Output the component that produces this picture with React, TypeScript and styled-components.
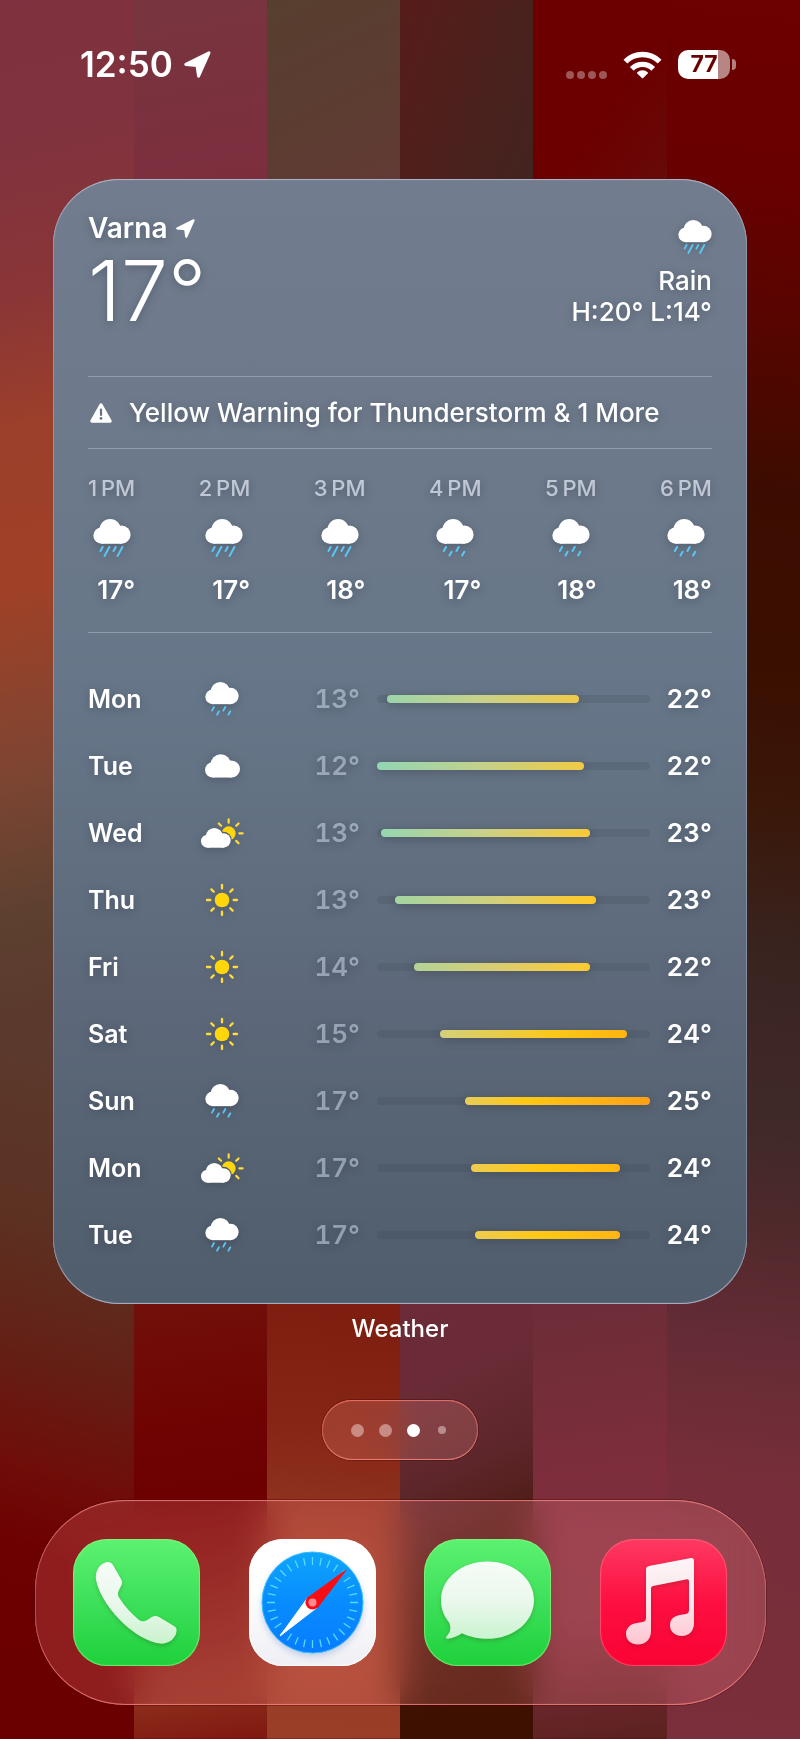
import React from "react";
import styled, { createGlobalStyle } from "styled-components";

const GlobalStyle = createGlobalStyle`
  *, *::before, *::after { box-sizing: border-box; }
  body {
    margin: 0;
    background: #6d0000;
    color: #fff;
    font-family: Inter, "Liberation Sans", sans-serif;
    -webkit-font-smoothing: antialiased;
  }
  #root { display: flex; flex-direction: column; min-height: 100vh; }
  h1, p, ol { margin: 0; padding: 0; list-style: none; }
  button { border: 0; padding: 0; background: none; color: inherit; font: inherit; cursor: pointer; }
  svg { display: block; }
`;

/* Wallpaper: six vertical stripes, each painted as a top and a bottom piece.
   Every stripe is a pixel wider than its share so that no seam shows. */
const stripe = (index: number, edge: "top" | "bottom", height: string, gradient: string) =>
  `linear-gradient(${gradient}) ${index * 20}% ${edge === "top" ? "0" : "100%"} / calc(100% / 6 + 1px) ${height} no-repeat`;

const wallpaper = [
  stripe(0, "top", "60%",
    "168deg, #7f313f 0%, #80323e 13%, #8a3637 28%, #9c3f2b 40%, #a04127 55%, #7c4532 73%, #5d4030 86%, #5b3a2d 95%"),
  stripe(0, "bottom", "41%", "195deg, #5b3a2d 5%, #5c3122 30%, #641f15 48%, #6f0e0a 62%, #6d0000 74%, #6a0000 100%"),
  stripe(1, "top", "20%", "170deg, #77353f, #7f2c3e 70%"),
  stripe(1, "bottom", "35%", "172deg, #6a1a12 0%, #71110a 27%, #6f0202 50%, #6d0000 60%, #7e1f14 84%, #8a2c1c 92%, #80180f 100%"),
  stripe(2, "top", "20%", "155deg, #573f2f 0%, #5f3b33 50%, #6f3a3f 80%"),
  stripe(2, "bottom", "35%", "186deg, #7c1c0e 0%, #7e1e10 30%, #862617 50%, #963a24 70%, #9b3e27 100%"),
  stripe(3, "top", "20%", "110deg, #571c1a 0%, #4b211d 45%, #3c2521 100%"),
  stripe(3, "bottom", "35%", "155deg, #6c2d39 0%, #6a2b36 40%, #5d262a 55%, #4a190f 70%, #3d1000 90%"),
  stripe(4, "top", "20%", "125deg, #6c0000 0%, #6c0000 40%, #611511 100%"),
  stripe(4, "bottom", "35%", "172deg, #602b36 0%, #6e2d38 32%, #7d2d3c 55%, #7b2d3b 80%, #5c211f 100%"),
  stripe(5, "top", "100%",
    "186deg, #6d0000 0%, #690000 10%, #560500 19%, #3d0c00 28%, #3a0f00 38%, #3a1708 46%, #39231f 54%, #41292a 65%, #4f292b 70%, #652c35 77%, #772e3a 85%, #7b2e3b 100%"),
].join(", ");

const Screen = styled.main`
  flex: 1;
  display: flex;
  flex-direction: column;
  align-items: stretch;
  padding-bottom: 32px;
  background: ${wallpaper};
`;

const StatusBar = styled.header`
  display: flex;
  align-items: center;
  justify-content: space-between;
  padding: 43px 64px 43px 80px;
  height: 129px;
  margin-bottom: 50px;
`;

const StatusGroup = styled.div<{ $gap: number }>`
  display: flex;
  align-items: center;
  gap: ${(p) => p.$gap}px;
`;

const Time = styled.time`
  font-size: 35px;
  line-height: 43px;
  font-weight: 600;
`;

const SignalDots = styled.div`
  display: flex;
  align-self: flex-end;
  gap: 3px;
  i {
    width: 8px;
    height: 8px;
    border-radius: 50%;
    background: rgba(255, 255, 255, 0.34);
  }
`;

const Battery = styled.div`
  display: flex;
  align-items: center;
  gap: 2px;
  &::after {
    content: "";
    width: 4px;
    height: 11px;
    border-radius: 0 6px 6px 0;
    background: rgba(255, 255, 255, 0.5);
  }
`;

const BatteryLevel = styled.div`
  width: 52px;
  height: 29px;
  border-radius: 10px;
  background: linear-gradient(90deg, #fff 77%, rgba(255, 255, 255, 0.52) 77%);
  color: #6b0000;
  font-size: 23px;
  line-height: 29px;
  font-weight: 700;
  text-align: center;
`;

const Widget = styled.article`
  margin: 0 53px;
  padding: 33px 35px 36px;
  border-radius: 66px;
  background: linear-gradient(180deg, #717d8e 0%, #6e7a8b 20%, #667688 46%, #5d697a 72%, #505d6c 100%);
  box-shadow:
    inset 0 0 0 1px rgba(190, 200, 220, 0.28),
    inset 0 1px 1px rgba(225, 220, 240, 0.5),
    inset 0 -1px 1px rgba(215, 210, 240, 0.65);
  text-shadow: 0 2px 8px rgba(40, 50, 65, 0.4);
`;

const Summary = styled.section`
  display: flex;
  justify-content: space-between;
  height: 165px;
  border-bottom: 1px solid #919dae;
`;

const Place = styled.h1`
  display: flex;
  align-items: center;
  gap: 9px;
  font-size: 28px;
  line-height: 32px;
  font-weight: 600;
`;

const BigTemp = styled.p`
  font-size: 84px;
  line-height: 94px;
  font-weight: 300;
`;

const Conditions = styled.div`
  display: flex;
  flex-direction: column;
  align-items: flex-end;
  padding-top: 8px;
  font-size: 26px;
  line-height: 31px;
  font-weight: 500;
  svg { margin-bottom: 11px; }
`;

const Warning = styled.section`
  display: flex;
  align-items: center;
  gap: 17px;
  height: 72px;
  padding-left: 2px;
  border-bottom: 1px solid #919dae;
  font-size: 26px;
  line-height: 32px;
  font-weight: 500;
`;

const Hours = styled.ol`
  display: flex;
  justify-content: space-between;
  height: 184px;
  padding-top: 25px;
  border-bottom: 1px solid #919dae;
`;

const Hour = styled.li`
  display: flex;
  flex-direction: column;
  align-items: center;
  font-size: 26px;
  line-height: 32px;
  font-weight: 600;
  time {
    margin-bottom: 17px;
    color: rgba(240, 245, 255, 0.66);
    font-size: 22px;
    line-height: 28px;
    font-weight: 500;
  }
  span { align-self: flex-end; margin-top: 17px; }
`;

const Days = styled.ol`
  padding-top: 32px;
`;

const Day = styled.li`
  display: grid;
  grid-template-columns: 109px 50px 1fr 273px 62px;
  align-items: center;
  height: 67px;
  font-size: 26px;
  line-height: 32px;
  font-weight: 600;
`;

const DayName = styled.span`
  font-size: 25px;
`;

const IconCell = styled.span`
  display: flex;
  justify-content: center;
`;

const Temp = styled.span<{ $dim?: boolean }>`
  text-align: right;
  font-variant-numeric: tabular-nums;
  padding-right: ${(p) => (p.$dim ? 17 : 0)}px;
  color: ${(p) => (p.$dim ? "rgba(205, 215, 235, 0.56)" : "#fff")};
`;

const Track = styled.span`
  display: block;
  height: 8px;
  border-radius: 4px;
  background: rgba(50, 60, 75, 0.16);
`;

const Range = styled.span<{ $colors: string }>`
  display: block;
  height: 8px;
  border-radius: 4px;
  background: linear-gradient(90deg, ${(p) => p.$colors});
  box-shadow: 0 2px 10px rgba(50, 50, 60, 0.4);
`;

const WidgetName = styled.p`
  margin-top: 10px;
  text-align: center;
  font-size: 24px;
  line-height: 30px;
  font-weight: 500;
`;

const Pager = styled.nav`
  align-self: center;
  display: flex;
  align-items: center;
  justify-content: space-between;
  width: 156px;
  height: 60px;
  margin: 56px 0 40px;
  padding: 0 29px;
  border-radius: 30px;
  background: rgba(255, 160, 150, 0.2);
  backdrop-filter: blur(14px);
  box-shadow:
    inset 0 0 0 1px rgba(255, 130, 120, 0.4),
    inset 0 1px 1px rgba(255, 130, 120, 0.6),
    inset 0 -1px 1px rgba(255, 150, 140, 0.7),
    0 0 0 1px rgba(50, 0, 0, 0.3);
`;

const Dot = styled.button<{ $active?: boolean; $small?: boolean }>`
  width: ${(p) => (p.$small ? 8 : 13)}px;
  height: ${(p) => (p.$small ? 8 : 13)}px;
  margin: 0 ${(p) => (p.$small ? 3 : 0)}px;
  border-radius: 50%;
  background: ${(p) => (p.$active ? "#fff" : "rgba(255, 235, 235, 0.45)")};
`;

const Dock = styled.nav`
  display: flex;
  align-items: center;
  justify-content: space-between;
  height: 205px;
  margin: 0 34px 0 35px;
  padding: 0 39px 0 38px;
  border-radius: 90px;
  background: rgba(255, 145, 150, 0.2);
  backdrop-filter: blur(18px) brightness(1.08);
  box-shadow:
    inset 0 0 0 1px rgba(255, 130, 130, 0.35),
    inset 0 1px 1px rgba(255, 150, 150, 0.6),
    inset 0 -1px 1px rgba(255, 140, 130, 0.7),
    0 0 0 1px rgba(50, 0, 0, 0.3);
`;

const AppIcon = styled.button<{ $fill: string; $rim: string }>`
  width: 127px;
  height: 127px;
  border-radius: 34px;
  overflow: hidden;
  background: ${(p) => p.$fill};
  box-shadow: inset 0 0 1px 1px ${(p) => p.$rim};
`;

const LocationArrow = ({ size }: { size: number }) => (
  <svg width={size} height={size} viewBox="0 0 27 27" fill="#fff" stroke="#fff" strokeWidth="3" strokeLinejoin="round" aria-hidden="true">
    <path d="M1.8 13.4 25 1.8 14.6 25.2 13 14.6Z" />
  </svg>
);

const Wifi = () => (
  <svg width="39" height="28" viewBox="0 0 39 28" fill="none" stroke="#fff" strokeWidth="5.4" aria-hidden="true">
    <path d="M2.4 10.6A24.2 24.2 0 0 1 36.6 10.6" />
    <path d="M8.8 17.8A15.2 15.2 0 0 1 30.2 17.8" />
    <path d="M19.5 26.4 15 21.9A6.6 6.6 0 0 1 24 21.9Z" fill="#fff" strokeWidth="2" strokeLinejoin="round" />
  </svg>
);

const WarningIcon = () => (
  <svg width="22" height="20" viewBox="0 0 22 20" aria-hidden="true">
    <path d="M11 2 20 18H2Z" fill="#fff" stroke="#fff" strokeWidth="3.4" strokeLinejoin="round" />
    <path d="M11 6.6V12" stroke="#667284" strokeWidth="2.2" strokeLinecap="round" />
    <circle cx="11" cy="15.4" r="1.4" fill="#667284" />
  </svg>
);

const SkySvg = styled.svg`
  overflow: visible;
  filter: drop-shadow(0 2px 5px rgba(40, 50, 65, 0.35));
`;

const CloudShape = ({ transform }: { transform?: string }) => (
  <g transform={transform} fill="#fff">
    <circle cx="45" cy="29" r="29" />
    <circle cx="22" cy="44.5" r="22" />
    <circle cx="75.5" cy="42" r="24.5" />
    <rect x="22" y="36" width="54" height="30.5" />
  </g>
);

type Sky = "rain" | "drizzle" | "cloud" | "partly" | "sun";

const drops: Record<string, string> = {
  rain: "M25 75 19 86M43 75 30 99M60 75 54 86M78 75 65 99",
  drizzle: "M26 75 20 86M41 88 35 98M60 75 54 86M75 88 69 98",
};

const rays = (inner: number, outer: number, angles: number[]) =>
  angles
    .map((a) => {
      const c = Math.cos((a * Math.PI) / 180);
      const s = Math.sin((a * Math.PI) / 180);
      return `M${inner * c} ${inner * s}L${outer * c} ${outer * s}`;
    })
    .join("");

const SkyIcon = ({ sky, size = 34 }: { sky: Sky; size?: number }) => {
  if (sky === "sun")
    return (
      <SkySvg width="32" height="32" viewBox="-48 -48 96 96" role="img" aria-label="Sunny">
        <circle r="22" fill="#ffd60a" />
        <path d={rays(35, 45, [0, 45, 90, 135, 180, 225, 270, 315])} stroke="#ffdc3a" strokeWidth="7" strokeLinecap="round" />
      </SkySvg>
    );
  if (sky === "partly")
    return (
      <SkySvg width="43" height="30" viewBox="455 501 129 90" role="img" aria-label="Partly cloudy">
        <mask id="cloud-gap">
          <rect x="440" y="490" width="160" height="110" fill="#fff" />
          <g fill="#000" stroke="#000" strokeWidth="7">
            <circle cx="495" cy="557" r="26" />
            <circle cx="522" cy="568" r="22" />
          </g>
        </mask>
        <g mask="url(#cloud-gap)">
          <circle cx="538" cy="547" r="21" fill="#ffd60a" />
        </g>
        <g transform="translate(538 547)">
          <path d={rays(32, 42, [0, 45, 225, 270, 315])} stroke="#ffdc3a" strokeWidth="6.5" strokeLinecap="round" />
        </g>
        <CloudShape transform="translate(455 531) scale(.89)" />
      </SkySvg>
    );
  if (sky === "cloud")
    return (
      <SkySvg width="35" height="24" viewBox="0 0 100 67" role="img" aria-label="Cloudy">
        <CloudShape />
      </SkySvg>
    );
  return (
    <SkySvg width={size} height={size} viewBox="0 0 100 102" role="img" aria-label="Rain">
      <CloudShape />
      <path d={drops[sky]} fill="none" stroke="#5ac8f5" strokeWidth="5.4" strokeLinecap="round" />
    </SkySvg>
  );
};

const GlyphFill = ({ id, to }: { id: string; to: string }) => (
  <linearGradient id={id} x1="0" y1="0" x2="0" y2="1">
    <stop offset="0" stopColor="#fff" stopOpacity=".95" />
    <stop offset=".5" stopColor="#fff" stopOpacity=".9" />
    <stop offset="1" stopColor={to} />
  </linearGradient>
);

const Glyph = styled.svg.attrs({ width: 127, height: 127, viewBox: "0 0 127 127", "aria-hidden": true })`
  .raised { filter: drop-shadow(0 2px 2px rgba(40, 30, 10, 0.22)); }
  .dial { filter: drop-shadow(0 3px 3px rgba(40, 90, 180, 0.25)); }
`;

const PhoneGlyph = () => (
  <Glyph>
    <defs><GlyphFill id="phone-fill" to="#c9f2cd" /></defs>
    <path
      className="raised"
      fill="url(#phone-fill)"
      d="M31 24C35 22 38 23 40 26L48 40C49.5 43 49.5 45 48 47L46 51C44.5 54 44.5 57 47 60C52 68 59 75 66 81C69 83 72 82.5 75 80.5L78 78.5C81 76.8 83 76.5 86 78L101 87C104 89 104 91 103 95C100 102 94 105 87 104.6C75 103 62 95 51 85C38 73 26 56 23 41C22 33 25 27 31 24Z"
    />
  </Glyph>
);

const CompassGlyph = () => (
  <Glyph>
    <defs>
      <linearGradient id="compass-fill" x1="0" y1="0" x2="0" y2="1">
        <stop offset="0" stopColor="#0ea5fb" />
        <stop offset=".5" stopColor="#088cff" />
        <stop offset="1" stopColor="#087cff" />
      </linearGradient>
    </defs>
    <g transform="translate(63.5 63.5)">
      <circle className="dial" r="50.5" fill="url(#compass-fill)" stroke="#35bdfb" strokeWidth="1" />
      <path d={rays(37.5, 45.5, Array.from({ length: 32 }, (_, i) => i * 11.25))} stroke="#55dcfa" strokeWidth="1.3" />
      <path d="M-32.5 33.5 -5 -4.5 4.5 5Z" fill="#fff" stroke="#fff" strokeLinejoin="round" />
      <path d="M33.5 -32.5 -5 -4.5 5 5Z" fill="#f90d12" stroke="#f90d12" strokeLinejoin="round" />
      <circle r="7" fill="#f90d12" />
      <circle r="4" fill="#ff8b8e" />
    </g>
  </Glyph>
);

const MessageGlyph = () => (
  <Glyph>
    <defs><GlyphFill id="message-fill" to="#caf3cf" /></defs>
    <path
      className="raised"
      fill="url(#message-fill)"
      d="M63.5 22.5C89.5 22.5 110 39.5 110 61.2C110 82.8 89.5 99.8 63.5 99.8C55 99.8 45 98 38 94.3C33 97.5 28 99.6 23.8 99.7C21.6 99.7 21.3 98.5 22.8 97C26.5 93.5 27.5 88 25 83.5C20 77 17 70 17 61.2C17 39.5 37.5 22.5 63.5 22.5Z"
    />
  </Glyph>
);

const MusicGlyph = () => (
  <Glyph>
    <defs><GlyphFill id="music-fill" to="#ffc4d0" /></defs>
    <path
      className="raised"
      fill="url(#music-fill)"
      d="M49 27 91 19Q94 18.5 94 21.5V84C94 92 89 97 82 97C75 97 70 92.5 70 86.5C70 80 74 77 80 76L86 75C88 74.5 89 73.5 89 71V42Q89 40 87 40.3L53 47Q51 47.4 51 49.5V92C51 100 46 105.5 38 105.5C31 105.5 26 101 26 95C26 89 30 85 37 84L42.5 83C45 82.5 46 81.5 46 79V30.5Q46 27.6 49 27Z"
    />
  </Glyph>
);

const hours: { time: string; sky: Sky; temp: number }[] = [
  { time: "1\u202fPM", sky: "rain", temp: 17 },
  { time: "2\u202fPM", sky: "rain", temp: 17 },
  { time: "3\u202fPM", sky: "rain", temp: 18 },
  { time: "4\u202fPM", sky: "drizzle", temp: 17 },
  { time: "5\u202fPM", sky: "drizzle", temp: 18 },
  { time: "6\u202fPM", sky: "drizzle", temp: 18 },
];

/* start and end are the share of the track, in percent, that the range bar covers. */
const days: { name: string; sky: Sky; low: number; high: number; start: number; end: number; colors: string }[] = [
  { name: "Mon", sky: "drizzle", low: 13, high: 22, start: 3.7, end: 74, colors: "#9bd5a9, #c9d187 50%, #efca47" },
  { name: "Tue", sky: "cloud", low: 12, high: 22, start: 0, end: 75.8, colors: "#91d6b4, #c3d18b 50%, #f1ca43" },
  { name: "Wed", sky: "partly", low: 13, high: 23, start: 1.6, end: 78.2, colors: "#96d6b0, #cbd084 50%, #f9ca36" },
  { name: "Thu", sky: "sun", low: 13, high: 23, start: 6.6, end: 80.2, colors: "#a4d4a2, #d2cf7c 50%, #f8ca36 88%, #ffc929" },
  { name: "Fri", sky: "sun", low: 14, high: 22, start: 13.5, end: 78, colors: "#b3d395, #dcce6c 50%, #fdca2e" },
  { name: "Sat", sky: "sun", low: 15, high: 24, start: 23, end: 91.6, colors: "#d3d07c, #fdc818 62%, #ffb412" },
  { name: "Sun", sky: "drizzle", low: 17, high: 25, start: 32.2, end: 100, colors: "#e6cd59, #ffc814 32%, #ffa015" },
  { name: "Mon", sky: "partly", low: 17, high: 24, start: 34.4, end: 89, colors: "#eccc50, #ffc814 45%, #ffb514" },
  { name: "Tue", sky: "drizzle", low: 17, high: 24, start: 36, end: 89, colors: "#eccc50, #ffc814 45%, #ffb514" },
];

const green = "linear-gradient(180deg, #5cf271 0%, #3de05a 50%, #1ed03b 100%)";

const apps = [
  { name: "Phone", fill: green, rim: "rgba(150, 240, 130, 0.7)", Icon: PhoneGlyph },
  { name: "Safari", fill: "linear-gradient(180deg, #fff 40%, #efeff4)", rim: "#fff", Icon: CompassGlyph },
  { name: "Messages", fill: green, rim: "rgba(150, 240, 130, 0.7)", Icon: MessageGlyph },
  { name: "Music", fill: "linear-gradient(180deg, #fd3a62 0%, #fd0f41 50%, #fb0234 100%)", rim: "rgba(255, 110, 130, 0.65)", Icon: MusicGlyph },
];

export default function App() {
  return (
    <>
      <GlobalStyle />
      <Screen>
        <StatusBar>
          <StatusGroup $gap={11}>
            <Time>12:50</Time>
            <LocationArrow size={27} />
          </StatusGroup>
          <StatusGroup $gap={16}>
            <SignalDots><i /><i /><i /><i /></SignalDots>
            <Wifi />
            <Battery><BatteryLevel>77</BatteryLevel></Battery>
          </StatusGroup>
        </StatusBar>

        <Widget>
          <Summary>
            <div>
              <Place>Varna <LocationArrow size={19} /></Place>
              <BigTemp>17°</BigTemp>
            </div>
            <Conditions>
              <SkyIcon sky="rain" />
              <p>Rain</p>
              <p>H:20° L:14°</p>
            </Conditions>
          </Summary>
          <Warning>
            <WarningIcon />
            <p>Yellow Warning for Thunderstorm &amp; 1 More</p>
          </Warning>
          <Hours>
            {hours.map((h) => (
              <Hour key={h.time}>
                <time>{h.time}</time>
                <SkyIcon sky={h.sky} size={38} />
                <span>{h.temp}°</span>
              </Hour>
            ))}
          </Hours>
          <Days>
            {days.map((d, i) => (
              <Day key={i}>
                <DayName>{d.name}</DayName>
                <IconCell><SkyIcon sky={d.sky} /></IconCell>
                <Temp $dim>{d.low}°</Temp>
                <Track>
                  <Range $colors={d.colors} style={{ marginLeft: `${d.start}%`, width: `${d.end - d.start}%` }} />
                </Track>
                <Temp>{d.high}°</Temp>
              </Day>
            ))}
          </Days>
        </Widget>
        <WidgetName>Weather</WidgetName>

        <Pager aria-label="Home screen pages">
          <Dot aria-label="Page 1" />
          <Dot aria-label="Page 2" />
          <Dot aria-label="Page 3" aria-current="page" $active />
          <Dot aria-label="Page 4" $small />
        </Pager>

        <Dock aria-label="Dock">
          {apps.map(({ name, fill, rim, Icon }) => (
            <AppIcon key={name} aria-label={name} $fill={fill} $rim={rim}>
              <Icon />
            </AppIcon>
          ))}
        </Dock>
      </Screen>
    </>
  );
}
